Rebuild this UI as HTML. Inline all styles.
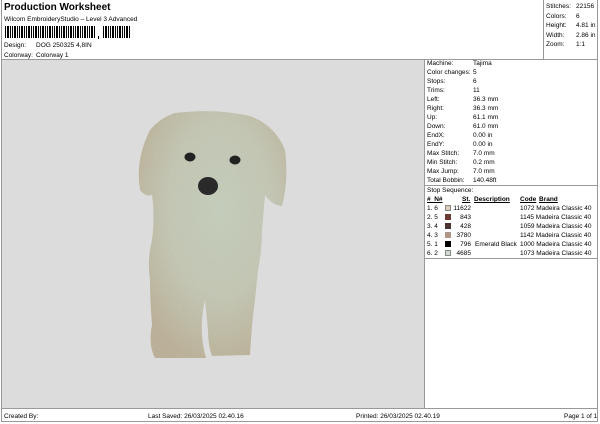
<!DOCTYPE html><html><head><style>
*{margin:0;padding:0;box-sizing:border-box}
body{width:600px;height:424px;background:#fff;font-family:"Liberation Sans",sans-serif;position:relative;overflow:hidden;color:#000}
.a{position:absolute;font-size:6.5px;line-height:9px;white-space:nowrap}
.l{position:absolute;background:#999}
</style></head><body>
<div class="l" style="left:1px;top:0;width:1px;height:422px"></div>
<div class="l" style="left:597px;top:0;width:1px;height:422px"></div>
<div class="l" style="left:1px;top:421px;width:597px;height:1px"></div>
<div class="a" style="left:4px;top:2px;font-size:10px;line-height:12px;font-weight:bold">Production Worksheet</div>
<div class="a" style="left:4px;top:15px">Wilcom EmbroideryStudio – Level 3 Advanced</div>
<div style="position:absolute;left:5px;top:26px;width:126px;height:12px;background:repeating-linear-gradient(90deg,#000 0 1px,#fff 1px 2px,#000 2px 4px,#fff 4px 5px,#000 5px 6px,#fff 6px 7px)"></div>
<div style="position:absolute;left:96px;top:26px;width:6px;height:13px;background:#fff"></div>
<div style="position:absolute;left:98px;top:36px;width:1px;height:3px;background:#000"></div>
<div class="a" style="left:4px;top:41px">Design:</div><div class="a" style="left:36px;top:41px">DOG 250325 4,8IN</div>
<div class="a" style="left:4px;top:51px">Colorway:</div><div class="a" style="left:36px;top:51px">Colorway 1</div>
<div class="l" style="left:1px;top:59px;width:597px;height:1px"></div>
<div style="position:absolute;left:2px;top:60px;width:422px;height:348px;background:#dcdcdc"></div>
<div class="l" style="left:424px;top:60px;width:1px;height:348px"></div>
<div class="l" style="left:543px;top:0;width:1px;height:59px"></div>
<div class="a" style="left:546px;top:2px;line-height:9.5px">Stitches:<br>Colors:<br>Height:<br>Width:<br>Zoom:</div>
<div class="a" style="left:576px;top:2px;line-height:9.5px">22156<br>6<br>4.81 in<br>2.86 in<br>1:1</div>
<div class="a" style="left:427px;top:59px">Machine:<br>Color changes:<br>Stops:<br>Trims:<br>Left:<br>Right:<br>Up:<br>Down:<br>EndX:<br>EndY:<br>Max Stitch:<br>Min Stitch:<br>Max Jump:<br>Total Bobbin:</div>
<div class="a" style="left:473px;top:59px">Tajima<br>5<br>6<br>11<br>36.3 mm<br>36.3 mm<br>61.1 mm<br>61.0 mm<br>0.00 in<br>0.00 in<br>7.0 mm<br>0.2 mm<br>7.0 mm<br>140.48ft</div>
<div class="l" style="left:425px;top:185px;width:172px;height:1px"></div>
<div class="a" style="left:427px;top:186px">Stop Sequence:</div>
<div class="a" style="left:427px;top:195px;font-weight:bold;text-decoration:underline">#&nbsp; N#</div>
<div class="a" style="left:462px;top:195px;font-weight:bold;text-decoration:underline">St.</div>
<div class="a" style="left:474px;top:195px;font-weight:bold;text-decoration:underline">Description</div>
<div class="a" style="left:520px;top:195px;font-weight:bold;text-decoration:underline">Code</div>
<div class="a" style="left:539px;top:195px;font-weight:bold;text-decoration:underline">Brand</div>
<div class="a" style="left:427px;top:204px">1. 6<br>2. 5<br>3. 4<br>4. 3<br>5. 1<br>6. 2</div>
<div style="position:absolute;left:445px;top:205px;width:6px;height:6px;background:#d8cdb8;border:1px solid #888"></div>
<div style="position:absolute;left:445px;top:214px;width:6px;height:6px;background:#6a3d32"></div>
<div style="position:absolute;left:445px;top:223px;width:6px;height:6px;background:#4a3430"></div>
<div style="position:absolute;left:445px;top:232px;width:6px;height:6px;background:#b09888"></div>
<div style="position:absolute;left:445px;top:241px;width:6px;height:6px;background:#000"></div>
<div style="position:absolute;left:445px;top:250px;width:6px;height:6px;background:#d0dcd0;border:1px solid #888"></div>
<div class="a" style="left:448px;top:204px;width:23px;text-align:right">11622<br>843<br>428<br>3780<br>796<br>4685</div>
<div class="a" style="left:475px;top:204px"><br><br><br><br>Emerald Black</div>
<div class="a" style="left:520px;top:204px">1072 Madeira Classic 40<br>1145 Madeira Classic 40<br>1059 Madeira Classic 40<br>1142 Madeira Classic 40<br>1000 Madeira Classic 40<br>1073 Madeira Classic 40</div>
<div class="l" style="left:425px;top:258px;width:172px;height:1px"></div>
<div class="l" style="left:1px;top:408px;width:597px;height:1px"></div>
<div class="a" style="left:4px;top:412px">Created By:</div>
<div class="a" style="left:148px;top:412px">Last Saved: 26/03/2025 02.40.16</div>
<div class="a" style="left:356px;top:412px">Printed: 26/03/2025 02.40.19</div>
<div class="a" style="left:564px;top:412px">Page 1 of 1</div>
<svg style="position:absolute;left:0;top:0" width="600" height="424">
<defs><radialGradient id="g" cx="0.55" cy="0.4" r="0.65"><stop offset="0" stop-color="#c9d2c0"/><stop offset="0.55" stop-color="#c8cbb8"/><stop offset="1" stop-color="#c0b59c"/></radialGradient>
<filter id="n"><feTurbulence type="fractalNoise" baseFrequency="0.9" numOctaves="2" result="t"/><feColorMatrix type="saturate" values="0"/><feComponentTransfer><feFuncA type="linear" slope="0.25"/></feComponentTransfer><feComposite in2="SourceGraphic" operator="in"/><feBlend in2="SourceGraphic" mode="multiply"/></filter></defs>
<g filter="url(#n)">
<path fill="url(#g)" d="M175 113 Q215 108 250 116 Q275 125 285 150 Q289 180 282 206 Q272 205 265 195 L262 230 Q262 250 258 270 L255 300 Q252 320 250 355 L212 356 Q208 345 208 330 L205 300 Q198 330 206 358 L155 358 Q148 345 152 325 Q150 300 150 280 Q147 260 152 240 Q155 215 152 195 Q145 197 140 190 Q135 160 150 130 Q160 118 175 113Z"/>
</g>
<ellipse cx="190" cy="157" rx="5.5" ry="4.5" fill="#222"/>
<ellipse cx="235" cy="160" rx="5.5" ry="4.5" fill="#222"/>
<ellipse cx="208" cy="186" rx="10" ry="9" fill="#2a2a2a"/>
</svg>
</body></html>
